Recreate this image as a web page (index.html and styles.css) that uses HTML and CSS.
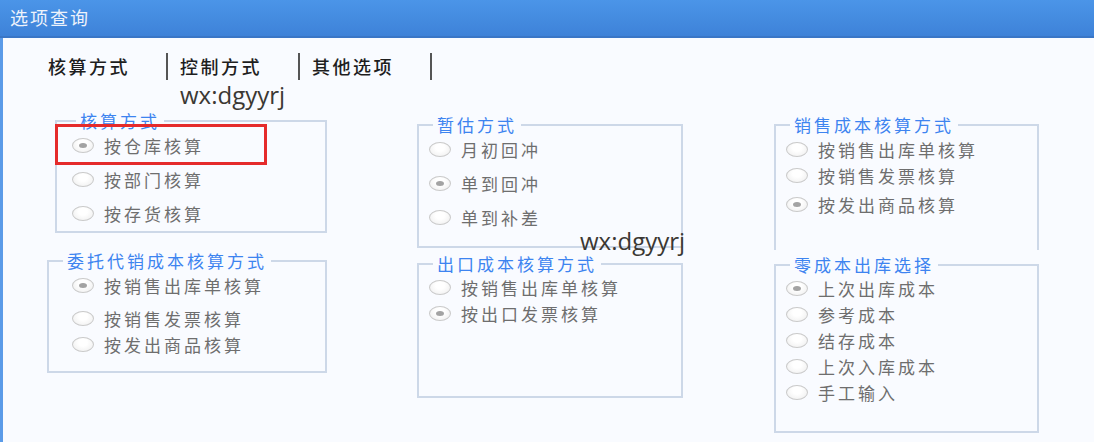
FILE: index.html
```html
<!DOCTYPE html>
<html lang="zh-CN">
<head>
    <meta charset="UTF-8">
    <title>选项查询</title>
    <link rel="stylesheet" href="styles.css">
</head>
<body>
    <div class="window">
        <div class="titlebar">选项查询</div>

        <div class="content">
            <!-- Вкладки -->
            <div class="tabs">
                <span class="tab">核算方式</span><span class="sep"></span>
                <span class="tab">控制方式</span><span class="sep"></span>
                <span class="tab">其他选项</span><span class="sep"></span>
            </div>

            <div class="columns">
                <div class="col col-1">
                    <div class="group g-stock">
                        <span class="legend legend-wide">核算方式</span>
                        <label class="opt"><span class="radio checked"></span>按仓库核算</label>
                        <label class="opt"><span class="radio"></span>按部门核算</label>
                        <label class="opt"><span class="radio"></span>按存货核算</label>
                        <div class="highlight"></div>
                    </div>
                    <div class="group g-consign">
                        <span class="legend">委托代销成本核算方式</span>
                        <label class="opt"><span class="radio checked"></span>按销售出库单核算</label>
                        <label class="opt opt-gap"><span class="radio"></span>按销售发票核算</label>
                        <label class="opt"><span class="radio"></span>按发出商品核算</label>
                    </div>
                </div>

                <div class="col col-2">
                    <div class="group g-estimate">
                        <span class="legend">暂估方式</span>
                        <label class="opt"><span class="radio"></span>月初回冲</label>
                        <label class="opt"><span class="radio checked"></span>单到回冲</label>
                        <label class="opt"><span class="radio"></span>单到补差</label>
                    </div>
                    <div class="group g-export">
                        <span class="legend">出口成本核算方式</span>
                        <label class="opt"><span class="radio"></span>按销售出库单核算</label>
                        <label class="opt"><span class="radio checked"></span>按出口发票核算</label>
                    </div>
                </div>

                <div class="col col-3">
                    <div class="group g-sales">
                        <span class="legend">销售成本核算方式</span>
                        <label class="opt"><span class="radio"></span>按销售出库单核算</label>
                        <label class="opt"><span class="radio"></span>按销售发票核算</label>
                        <label class="opt opt-gap-sm"><span class="radio checked"></span>按发出商品核算</label>
                    </div>
                    <div class="group g-zero">
                        <span class="legend">零成本出库选择</span>
                        <label class="opt"><span class="radio checked"></span>上次出库成本</label>
                        <label class="opt"><span class="radio"></span>参考成本</label>
                        <label class="opt"><span class="radio"></span>结存成本</label>
                        <label class="opt"><span class="radio"></span>上次入库成本</label>
                        <label class="opt"><span class="radio"></span>手工输入</label>
                    </div>
                </div>
            </div>

            <span class="watermark wm-1">wx:dgyyrj</span>
            <span class="watermark wm-2">wx:dgyyrj</span>
        </div>
    </div>
</body>
</html>
```

FILE: styles.css
```css
* {
    margin: 0;
    padding: 0;
    box-sizing: border-box;
}

body {
    width: 1094px;
    height: 442px;
    overflow: hidden;
    background-color: #f9fbff;
    font-family: "Noto Sans CJK SC", sans-serif;
}

.window {
    height: 442px;
    display: flex;
    flex-direction: column;
}

.titlebar {
    height: 38px;
    padding-left: 10px;
    line-height: 35px;
    font-size: 18px;
    letter-spacing: 2px;
    color: #eef3fb;
    background: linear-gradient(#4b95e8, #3e82d8);
    border-bottom: 2px solid #3a76c6;
}

.content {
    flex: 1;
    position: relative;
    border-left: 3px solid #5b9be8;
    background-color: #f9fbff;
}

/* Вкладки */
.tabs {
    display: flex;
    align-items: center;
    height: 26px;
    margin-top: 15px;
    padding-left: 45px;
}

.tab {
    font-size: 18px;
    font-weight: 500;
    letter-spacing: 2.5px;
    color: #1e1e1e;
    line-height: 26px;
}

.sep {
    width: 2px;
    height: 27px;
    background-color: #555;
    margin: 0 12px 0 36px;
}

/* Колонки с группами */
.columns {
    display: flex;
    align-items: flex-start;
    margin-top: 41px;
}

.col {
    display: flex;
    flex-direction: column;
}

.col-1 {
    width: 280px;
    margin-left: 44px;
}

.col-2 {
    width: 266px;
    margin-left: 90px;
    margin-top: 4px;
}

.col-3 {
    width: 265px;
    margin-left: 91px;
    margin-top: 4px;
}

.group {
    position: relative;
    display: flex;
    flex-direction: column;
    border: 2px solid #cdd8e8;
    padding: 10px 0 0 10px;
}

.legend {
    position: absolute;
    top: -12px;
    left: 14px;
    padding: 0 4px;
    line-height: 22px;
    font-size: 17px;
    letter-spacing: 3px;
    color: #3d84f0;
    background-color: #f9fbff;
    white-space: nowrap;
}

.legend-wide {
    left: 19px;
}

.g-stock {
    width: 272px;
    height: 113px;
    margin-left: 8px;
    padding-left: 15px;
    gap: 8px;
}

.g-consign {
    height: 113px;
    margin-top: 27px;
    padding-left: 23px;
}

.g-estimate {
    height: 124px;
    gap: 8px;
}

.g-export {
    height: 135px;
    margin-top: 15px;
    padding-top: 9px;
}

.g-sales {
    height: 126px;
    border-bottom: none;
}

.g-zero {
    height: 169px;
    margin-top: 14px;
    padding-top: 9px;
}

.opt {
    display: flex;
    align-items: center;
    gap: 10px;
    height: 26px;
    font-size: 17px;
    letter-spacing: 3px;
    color: #6e6e6e;
    white-space: nowrap;
}

.opt-gap {
    margin-top: 7px;
}

.opt-gap-sm {
    margin-top: 3px;
}

.radio {
    position: relative;
    flex: none;
    width: 22px;
    height: 15px;
    border: 1px solid #cacaca;
    border-radius: 50%;
    background: radial-gradient(ellipse at 50% 35%, #ffffff 30%, #ececec 100%);
}

.radio.checked::after {
    content: "";
    position: absolute;
    top: 4px;
    left: 6px;
    width: 8px;
    height: 5px;
    border-radius: 50%;
    background-color: #a3a3a3;
}

/* Красная рамка выделения */
.highlight {
    position: absolute;
    left: -2px;
    top: 2px;
    width: 212px;
    height: 41px;
    border: 3px solid #e52b2b;
}

.watermark {
    position: absolute;
    font-family: "Open Sans", sans-serif;
    font-size: 24px;
    line-height: 24px;
    color: #3b3833;
}

.wm-1 {
    top: 45px;
    left: 177px;
}

.wm-2 {
    top: 191px;
    left: 577px;
}
```
